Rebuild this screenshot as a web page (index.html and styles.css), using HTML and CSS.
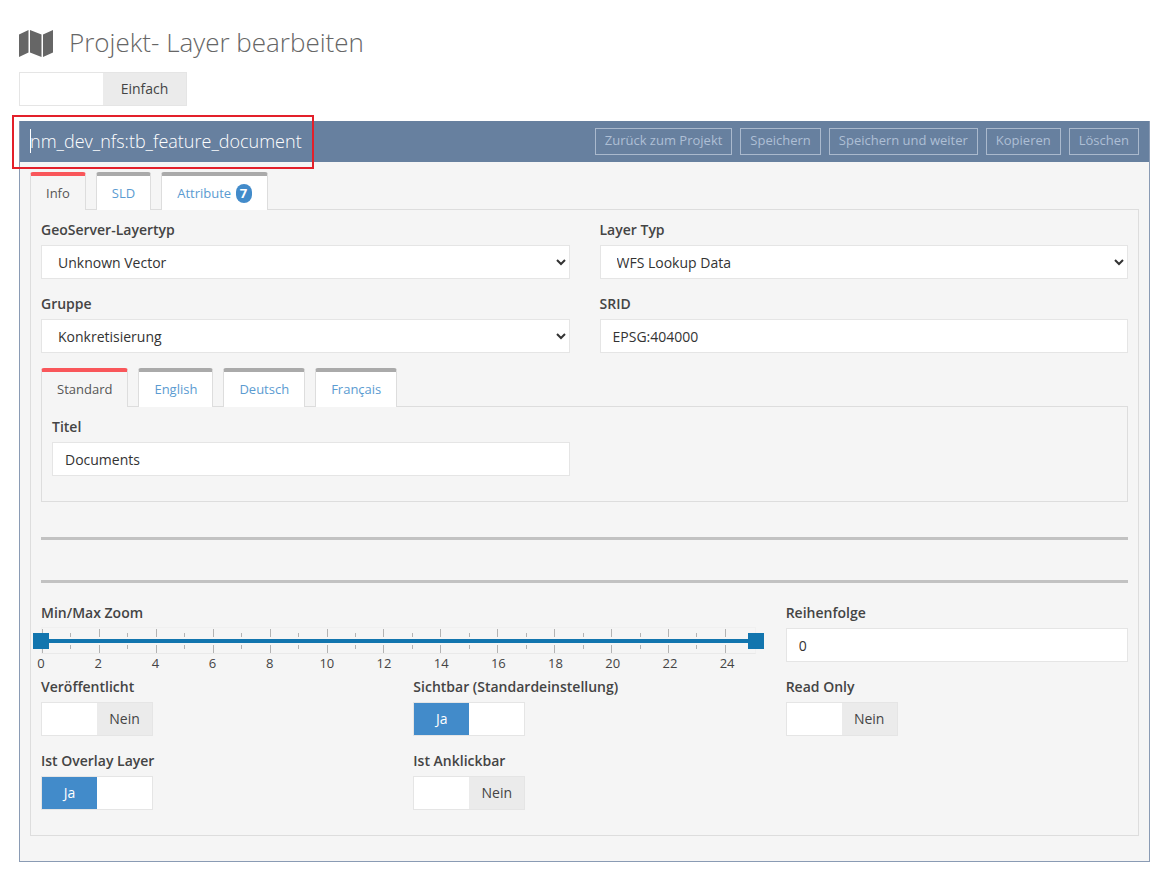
FILE: index.html
```html
<!DOCTYPE html>
<html lang="de">

<head>
  <meta charset="UTF-8">
  <meta name="viewport" content="width=device-width, initial-scale=1.0">
  <title>Projekt- Layer bearbeiten</title>
  <link rel="stylesheet" href="styles.css">
</head>

<body>
  <h1 class="page-title">
    <svg class="page-icon" viewBox="0 0 34 27" aria-hidden="true">
      <path d="M0 4.500 9.500 0v22.500L0 27zM11 0l11.500 4.500V27L11 22.500zM24 4.500 34 0v22.500L24 27z" />
    </svg>
    Projekt- Layer bearbeiten
  </h1>

  <label class="switch switch-wide">
    <input type="checkbox" aria-label="Ansicht">
    <span class="on">Erweitert</span>
    <span class="off">Einfach</span>
  </label>

  <main class="portlet">
    <header class="portlet-title">
      <h2 class="caption">nm_dev_nfs:tb_feature_document</h2>
      <div class="actions">
        <button type="button">Zurück zum Projekt</button>
        <button type="button">Speichern</button>
        <button type="button">Speichern und weiter</button>
        <button type="button">Kopieren</button>
        <button type="button">Löschen</button>
      </div>
    </header>

    <div class="portlet-body">
      <nav class="tabs">
        <a href="#info" class="active">Info</a>
        <a href="#sld">SLD</a>
        <a href="#attribute">Attribute <span class="badge">7</span></a>
      </nav>

      <form class="tab-content" id="info">
        <div class="row halves">
          <div class="form-group">
            <label for="geoserverType">GeoServer-Layertyp</label>
            <select id="geoserverType">
              <option>Unknown Vector</option>
            </select>
          </div>
          <div class="form-group">
            <label for="layerType">Layer Typ</label>
            <select id="layerType">
              <option>WFS Lookup Data</option>
            </select>
          </div>
          <div class="form-group">
            <label for="group">Gruppe</label>
            <select id="group">
              <option>Konkretisierung</option>
            </select>
          </div>
          <div class="form-group">
            <label for="srid">SRID</label>
            <input type="text" id="srid" value="EPSG:404000">
          </div>
        </div>

        <nav class="tabs">
          <a href="#standard" class="active">Standard</a>
          <a href="#english">English</a>
          <a href="#deutsch">Deutsch</a>
          <a href="#francais">Français</a>
        </nav>
        <div class="tab-content" id="standard">
          <div class="row halves">
            <div class="form-group">
              <label for="layerTitle">Titel</label>
              <input type="text" id="layerTitle" value="Documents">
            </div>
          </div>
        </div>

        <hr>
        <hr>

        <div class="row thirds">
          <div class="form-group zoom-group">
            <label for="minZoom">Min/Max Zoom</label>
            <div class="slider">
              <div class="ticks">
                <i></i><i></i><i></i><i></i><i></i><i></i><i></i><i></i><i></i><i></i><i></i><i></i><i></i><i></i><i></i><i></i><i></i><i></i><i></i><i></i><i></i><i></i><i></i><i></i><i></i>
              </div>
              <input type="range" id="minZoom" min="0" max="25" value="0">
              <input type="range" id="maxZoom" min="0" max="25" value="25" aria-label="Max Zoom">
            </div>
            <div class="scale">
              <span>0</span><span>2</span><span>4</span><span>6</span><span>8</span><span>10</span><span>12</span><span>14</span><span>16</span><span>18</span><span>20</span><span>22</span><span>24</span>
            </div>
          </div>
          <div class="form-group">
            <label for="order">Reihenfolge</label>
            <input type="text" id="order" value="0">
          </div>

          <div class="form-group">
            <label for="published">Veröffentlicht</label>
            <label class="switch">
              <input type="checkbox" id="published">
              <span class="on">Ja</span>
              <span class="off">Nein</span>
            </label>
          </div>
          <div class="form-group">
            <label for="visible">Sichtbar (Standardeinstellung)</label>
            <label class="switch">
              <input type="checkbox" id="visible" checked>
              <span class="on">Ja</span>
              <span class="off">Nein</span>
            </label>
          </div>
          <div class="form-group">
            <label for="readOnly">Read Only</label>
            <label class="switch">
              <input type="checkbox" id="readOnly">
              <span class="on">Ja</span>
              <span class="off">Nein</span>
            </label>
          </div>
          <div class="form-group">
            <label for="overlay">Ist Overlay Layer</label>
            <label class="switch">
              <input type="checkbox" id="overlay" checked>
              <span class="on">Ja</span>
              <span class="off">Nein</span>
            </label>
          </div>
          <div class="form-group">
            <label for="clickable">Ist Anklickbar</label>
            <label class="switch">
              <input type="checkbox" id="clickable">
              <span class="on">Ja</span>
              <span class="off">Nein</span>
            </label>
          </div>
        </div>
      </form>
    </div>
  </main>
</body>

</html>
```
FILE: styles.css
```css
* {
  box-sizing: border-box;
}

body {
  margin: 0;
  padding: 20px 20px 20px 19px;
  background-color: #fff;
  color: #444;
  font-family: "Open Sans", sans-serif;
  font-size: 14px;
  line-height: 20px;
}

input,
select,
button {
  font-family: inherit;
}

.page-title {
  display: flex;
  align-items: center;
  gap: 16px;
  margin: 0 0 8px;
  color: #666;
  font-size: 26px;
  font-weight: 300;
  line-height: 44px;
}

.page-icon {
  width: 34px;
  height: 27px;
  margin-top: 2px;
  fill: #666;
}

/* on/off switch */
.switch {
  position: relative;
  display: flex;
  width: 112px;
  height: 34px;
  border: 1px solid #e5e5e5;
  background-color: #fff;
  cursor: pointer;
}

.switch-wide {
  width: 168px;
}

.switch input {
  position: absolute;
  inset: 0;
  margin: 0;
  opacity: 0;
}

.switch span {
  flex: 1;
  line-height: 32px;
  text-align: center;
}

.switch .on {
  background-color: #428bca;
  color: #fff;
}

.switch .off {
  background-color: #ebebeb;
}

.switch input:not(:checked) ~ .on,
.switch input:checked ~ .off {
  visibility: hidden;
}

/* portlet */
.portlet {
  margin-top: 15px;
  border: 1px solid #8a9bb4;
  border-top: 0;
  background-color: #f5f5f5;
}

.portlet-title {
  display: flex;
  justify-content: space-between;
  align-items: center;
  height: 41px;
  padding: 0 10px 1px;
  background-color: #67809f;
}

.caption {
  position: relative;
  margin: 0;
  color: #fff;
  font-size: 18px;
  font-weight: 300;
  line-height: 24px;
}

/* text cursor */
.caption::before {
  content: '';
  position: absolute;
  top: 0;
  left: 0;
  width: 1px;
  height: 24px;
  background-color: #fff;
}

/* highlight frame around the layer name */
.caption::after {
  content: '';
  position: absolute;
  inset: -14px -12px -16px -18px;
  border: 2px solid #e3202a;
}

.actions {
  display: flex;
  gap: 8px;
}

.actions button {
  height: 27px;
  padding: 0 9px 2px;
  border: 1px solid #aab9cd;
  background: none;
  color: #aebfd5;
  font-size: 13px;
  cursor: pointer;
}

.portlet-body {
  padding: 10px 10px 25px;
}

.tabs {
  display: flex;
  gap: 10px;
}

.tabs a {
  position: relative;
  height: 38px;
  margin-bottom: -1px;
  padding: 0 15px;
  border: 1px solid #ddd;
  border-top: 4px solid #aaa;
  border-bottom: 0;
  border-radius: 3px 3px 0 0;
  background-color: #fff;
  color: #5b9bd1;
  font-size: 13px;
  line-height: 34px;
  text-decoration: none;
}

.tabs a.active {
  border-top-color: #f9565a;
  background-color: #f5f5f5;
  color: #555;
}

.tab-content .tabs a {
  height: 39px;
}

.badge {
  display: inline-block;
  width: 16px;
  height: 19px;
  margin-left: 1px;
  border-radius: 8px;
  background-color: #428bca;
  color: #fff;
  font-weight: 700;
  line-height: 19px;
  text-align: center;
}

.tab-content {
  padding: 10px;
  border: 1px solid #ddd;
}

.row {
  display: grid;
  column-gap: 30px;
}

.halves {
  grid-template-columns: repeat(2, minmax(0, 1fr));
}

.thirds {
  grid-template-columns: repeat(3, minmax(0, 1fr));
}

.form-group {
  margin-bottom: 15px;
}

.form-group > label:first-child {
  display: block;
  margin-bottom: 5px;
  font-weight: 600;
}

.form-group input[type="text"],
.form-group select {
  display: block;
  width: 100%;
  height: 34px;
  padding: 6px 12px;
  border: 1px solid #e5e5e5;
  border-radius: 0;
  background-color: #fff;
  color: #333;
  font-size: 14px;
}

hr {
  height: 3px;
  margin: 40px 0 20px;
  border: 0;
  background-color: #c2c2c2;
}

.tab-content + hr {
  margin-top: 35px;
}

/* zoom range */
.zoom-group {
  grid-column: span 2;
  margin-bottom: 4px;
}

.zoom-group > label:first-child {
  margin-bottom: 4px;
}

.slider {
  display: grid;
  height: 27px;
  border: 1px solid #f0f0f0;
  border-bottom-color: #e9e9e9;
  background: linear-gradient(#1275ae, #1275ae) center / 100% 4px no-repeat;
}

.ticks {
  grid-area: 1 / 1;
  display: flex;
  justify-content: space-between;
  align-items: center;
  width: 96%;
}

.ticks i {
  width: 1px;
  height: 24px;
  background: linear-gradient(#b3b3b3 8px, transparent 8px, transparent 16px, #b3b3b3 16px);
}

.ticks i:nth-child(even) {
  height: 16px;
  background: linear-gradient(#b3b3b3 4px, transparent 4px, transparent 12px, #b3b3b3 12px);
}

.slider input {
  grid-area: 1 / 1;
  appearance: none;
  align-self: center;
  height: 16px;
  margin: 0 -9px;
  background: none;
  pointer-events: none;
}

.slider input::-webkit-slider-thumb {
  appearance: none;
  width: 16px;
  height: 16px;
  background-color: #1275ae;
  pointer-events: auto;
}

.scale {
  display: flex;
  justify-content: space-between;
  width: 96%;
  font-size: 13px;
  line-height: 19px;
}

.scale span {
  display: flex;
  justify-content: center;
  width: 0;
}
```
